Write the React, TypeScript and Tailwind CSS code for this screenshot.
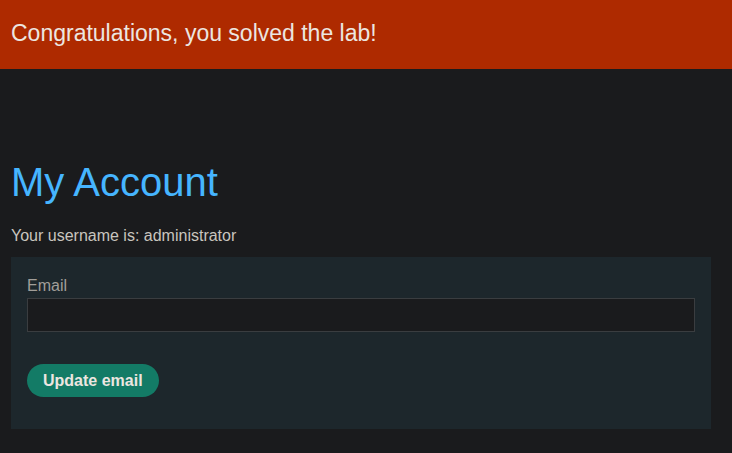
export default function App() {
  return (
    <div className="min-h-[453px] bg-[#1a1b1d] font-['Liberation_Sans',Arial,sans-serif]">
      {/* bannière de réussite */}
      <div className="flex h-[69px] items-center bg-[#ae2a00] px-[11px] pb-[3px]">
        <h4 className="text-[23px] leading-[28px] text-[#ece6e0]">Congratulations, you solved the lab!</h4>
      </div>

      <div className="ml-[11px] mr-[21px] pt-[89px]">
        <h1 className="text-[40px] leading-[48px] text-[#46b5ff]">My Account</h1>
        <p className="mt-[18px] text-[16px] leading-[24px] text-[#c9c5bf]">Your username is: administrator</p>

        <form className="mt-[9px] flex flex-col bg-[#1d272c] px-4 pt-[17px] pb-8" onSubmit={(e) => e.preventDefault()}>
          <label className="text-[16px] leading-[24px] text-[#a19e99]">Email</label>
          <input
            type="email"
            name="email"
            className="h-[34px] border border-[#3a3d40] bg-[#1a1b1d] px-2 text-[#e0ddd8] outline-none"
          />
          <div className="mt-8">
            <button
              type="submit"
              className="h-[33px] rounded-full bg-[#137b66] px-4 text-[16px] font-bold text-[#ece6e0]"
            >
              Update email
            </button>
          </div>
        </form>
      </div>
    </div>
  );
}
